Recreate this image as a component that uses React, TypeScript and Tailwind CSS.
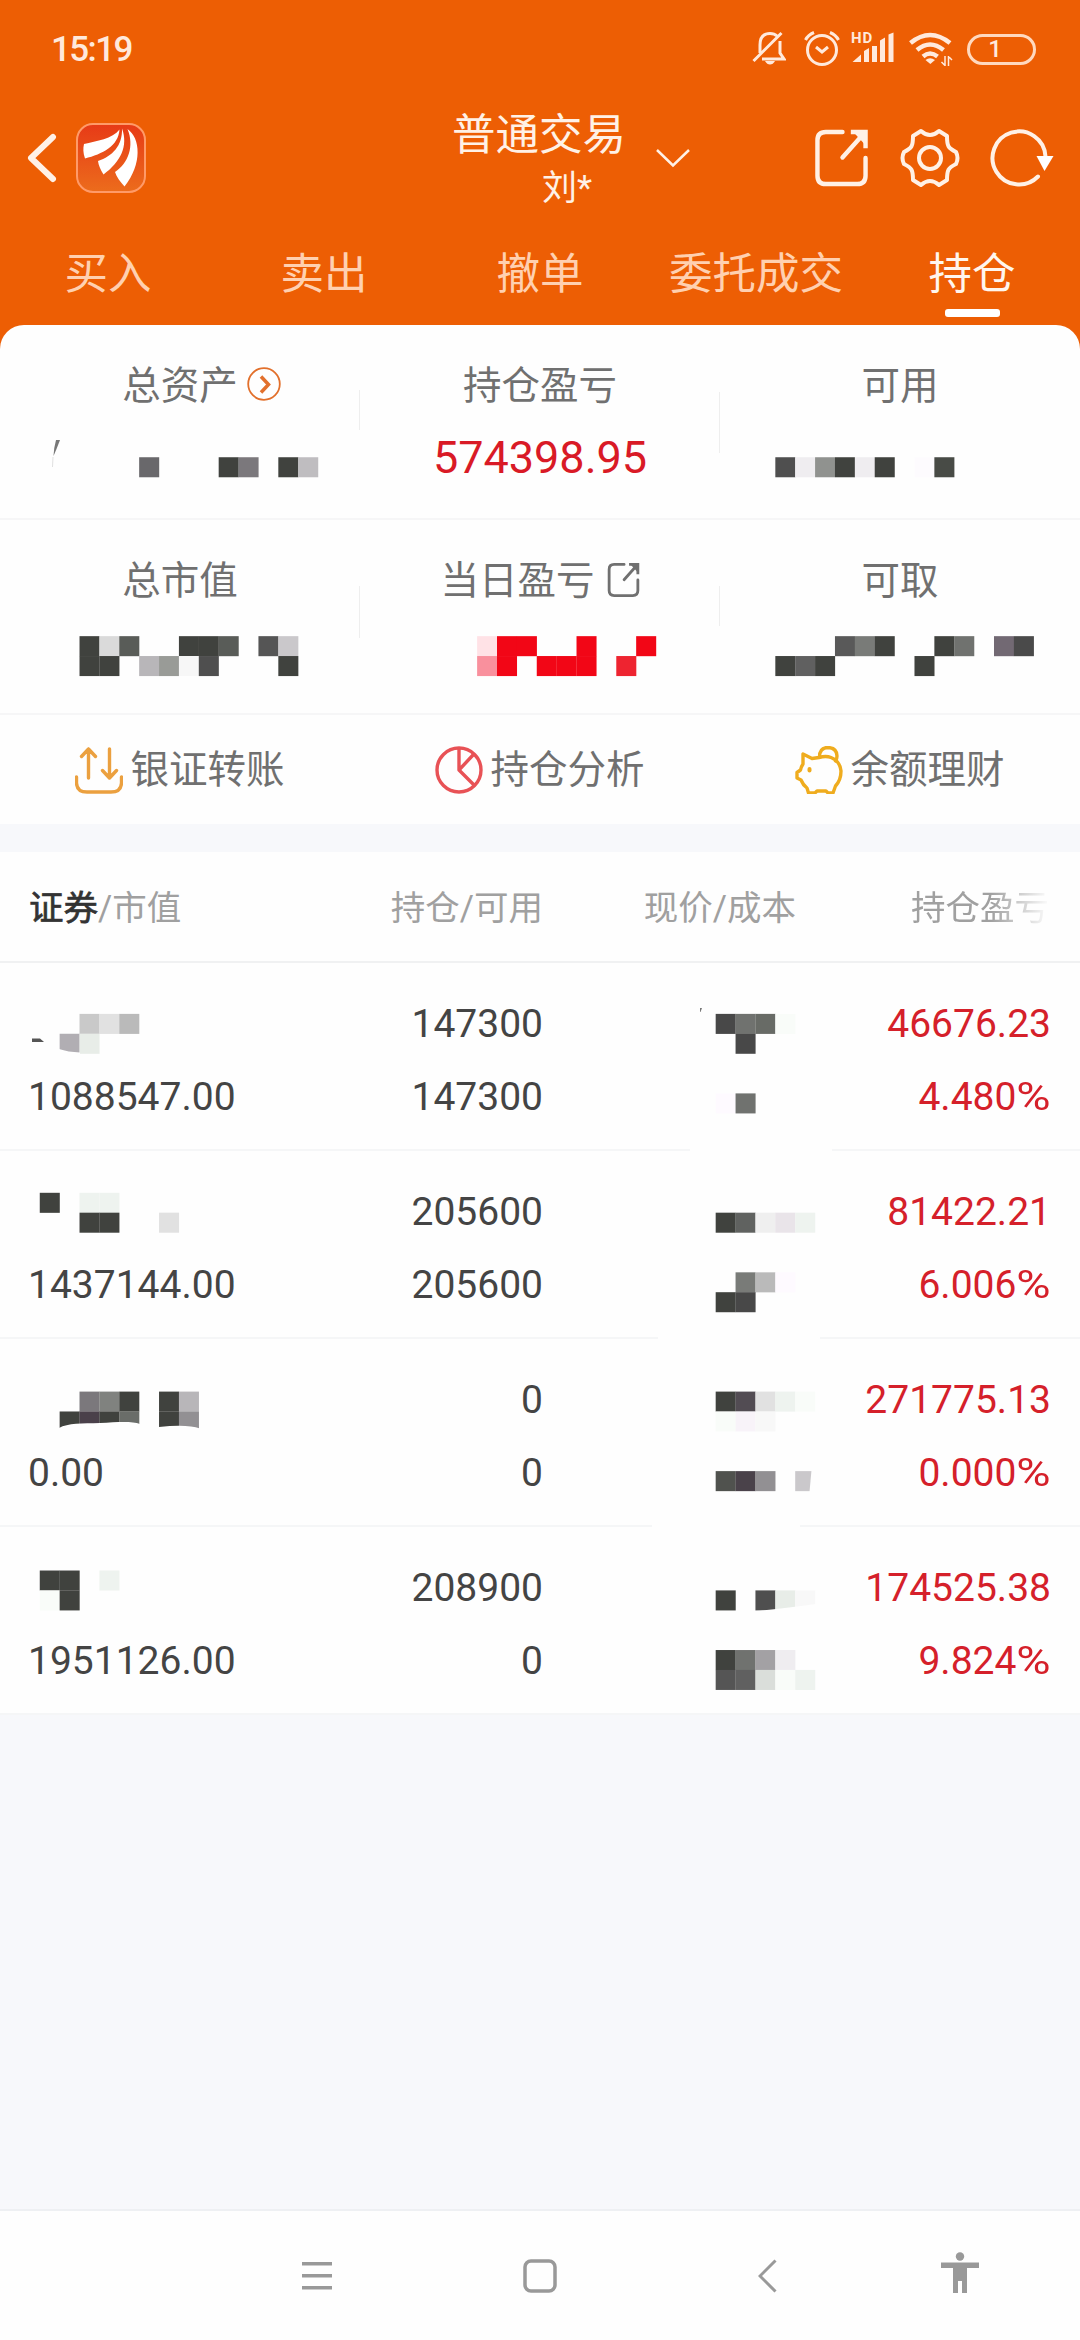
import React from 'react';

// Masked values sit on one page-wide grid, so cells are given as [column, row, color].
type Cell = [number, number, string];

const CELL = 19.88;
const DARK = '#40423e';
const RED = '#f20616';

interface MosaicProps {
    x: number;
    y: number;
    width: number;
    height: number;
    cells: Cell[];
    children?: React.ReactNode;
}

const Mosaic: React.FC<MosaicProps> = ({ x, y, width, height, cells, children }) => (
    <svg width={width} height={height} viewBox={`${x} ${y} ${width} ${height}`} className="block shrink-0">
        {cells.map(([col, row, color]) => (
            <rect key={`${col}-${row}`} x={col * CELL} y={row * CELL} width={CELL + 0.15} height={CELL + 0.15} fill={color} />
        ))}
        {children}
    </svg>
);

const totalAssets: Cell[] = [[7, 23, '#69686b'], [11, 23, DARK], [12, 23, '#7b787c'], [14, 23, DARK], [15, 23, '#bfbdc0']];
const available: Cell[] = [[39, 23, '#4f4f4f'], [40, 23, '#efedf0'], [41, 23, '#90928f'], [42, 23, DARK], [43, 23, '#efedf0'], [44, 23, DARK], [46, 23, '#fdfbfe'], [47, 23, '#484b46']];
const marketValue: Cell[] = [
    [4, 32, DARK], [5, 32, '#dadada'], [6, 32, '#595c58'], [9, 32, DARK], [10, 32, DARK], [11, 32, '#595c58'], [13, 32, '#555555'], [14, 32, '#cac8cb'],
    [4, 33, DARK], [5, 33, DARK], [7, 33, '#b8b6b9'], [8, 33, '#999b97'], [9, 33, '#f7f7f7'], [10, 33, '#4f4f4f'], [14, 33, DARK],
];
const dayProfit: Cell[] = [
    [24, 32, '#ffe2e6'], [25, 32, RED], [26, 32, RED], [29, 32, RED], [32, 32, RED],
    [24, 33, '#f9909d'], [25, 33, RED], [27, 33, RED], [28, 33, RED], [29, 33, RED], [31, 33, '#ee2430'],
];
const withdrawable: Cell[] = [
    [42, 32, '#595959'], [43, 32, '#797b78'], [44, 32, DARK], [47, 32, DARK], [48, 32, '#70726f'], [50, 32, '#726973'], [51, 32, '#4a4a4a'],
    [39, 33, DARK], [40, 33, '#606060'], [41, 33, DARK], [46, 33, DARK],
];

interface Holding {
    value: string;
    amount: string;
    usable: string;
    profit: string;
    rate: string;
    name: Cell[];
    nameExtra?: React.ReactNode;
    price: Cell[];
    priceExtra?: React.ReactNode;
    lineGap?: [number, number];
}

const holdings: Holding[] = [
    {
        value: '1088547.00', amount: '147300', usable: '147300', profit: '46676.23', rate: '4.480',
        name: [[4, 51, '#c9c9c9'], [5, 51, '#e1e1e1'], [6, 51, '#bababa'], [3, 52, '#b1aeb3'], [4, 52, '#e8ede8']],
        nameExtra: (
            <>
                <path d="M32 1038.5H40L44 1042H32Z" fill="#555" />
                <path d="M59 1049Q68 1052 80 1052.5V1055H59Z" fill="#fefefe" />
            </>
        ),
        price: [[36, 51, '#484848'], [37, 51, '#70726f'], [38, 51, '#686b66'], [39, 51, '#f9fcf9'], [37, 52, '#484848'], [36, 55, '#fefaff'], [37, 55, '#70726f']],
        priceExtra: <path d="M700 1008H702L700.5 1012H700Z" fill="#777" />,
        lineGap: [690, 832],
    },
    {
        value: '1437144.00', amount: '205600', usable: '205600', profit: '81422.21', rate: '6.006',
        name: [[2, 60, DARK], [4, 60, '#eef3ef'], [5, 60, '#eef3ef'], [4, 61, DARK], [5, 61, DARK], [8, 61, '#e1e1e1']],
        price: [[36, 61, DARK], [37, 61, '#606260'], [38, 61, '#efefef'], [39, 61, '#e9e4e9'], [40, 61, '#eef3ef'], [37, 64, '#797b78'], [38, 64, '#bababa'], [39, 64, '#fefaff'], [36, 65, DARK], [37, 65, '#484848']],
        lineGap: [658, 820],
    },
    {
        value: '0.00', amount: '0', usable: '0', profit: '271775.13', rate: '0.000',
        name: [[4, 70, '#7b787c'], [5, 70, '#80827f'], [6, 70, DARK], [8, 70, DARK], [9, 70, '#b8b6b9'], [3, 71, DARK], [4, 71, '#4a404a'], [5, 71, DARK], [6, 71, '#6a6d69'], [8, 71, DARK], [9, 71, '#929093']],
        nameExtra: <path d="M59 1428C68 1423 82 1423.5 100 1423C118 1422 132 1421 140 1424L159 1427Q187 1424 200 1428.5V1434H59Z" fill="#fefefe" />,
        price: [[36, 70, DARK], [37, 70, '#524c53'], [38, 70, '#e1e1e1'], [39, 70, '#eef3ef'], [40, 70, '#f9fcf9'], [36, 71, '#f9fcf9'], [37, 71, '#f8f3f9'], [38, 71, '#f8f8f8'], [36, 74, '#50524e'], [37, 74, '#4a424a'], [38, 74, '#929093'], [40, 74, '#cac8cb']],
        priceExtra: <path d="M811.5 1470H816V1492H809.5Z" fill="#fefefe" />,
        lineGap: [652, 800],
    },
    {
        value: '1951126.00', amount: '208900', usable: '0', profit: '174525.38', rate: '9.824',
        name: [[2, 79, DARK], [3, 79, DARK], [5, 79, '#eef3ef'], [2, 80, '#f9fcf9'], [3, 80, DARK]],
        price: [[36, 80, DARK], [38, 80, '#4f4f4f'], [39, 80, '#e8ede8'], [40, 80, '#f8f8f8'], [36, 83, DARK], [37, 83, '#70726f'], [38, 83, '#a3a1a4'], [39, 83, '#efedf0'], [36, 84, '#555555'], [37, 84, '#606060'], [38, 84, '#dadeda'], [39, 84, '#f9fcf9'], [40, 84, '#eef3ef']],
        priceExtra: <path d="M755 1611Q780 1609 816 1604V1612H755Z" fill="#fefefe" />,
    },
];

const StatusBar = () => (
    <div className="flex h-[98px] items-center justify-between pl-[51px] pr-[44px] text-[#ffe9dc]">
        <span className="pt-px text-[35px] font-medium leading-none tracking-[-1.6px]">15:19</span>
        <div className="flex items-center">
            <svg width="34" height="36" viewBox="752 31 34 36" fill="none" stroke="currentColor" strokeWidth="3">
                <path d="M760 53V45C760 37 764 33.500 770 33.500C773 33.500 775.500 34.500 777 36M780 41V53L784 59H762M753.500 61L781.500 33" />
                <path d="M765 61H775Q773 64.500 770 64.500Q767 64.500 765 61Z" fill="currentColor" stroke="none" />
            </svg>
            <svg width="36" height="36" viewBox="804 31 36 36" fill="none" stroke="currentColor" strokeWidth="3" className="ml-[18px]">
                <circle cx="822" cy="50" r="14.500" />
                <path d="M816 47L822 52L828 47M805.500 40Q808 35 814 32.500M838.500 40Q836 35 830 32.500" />
            </svg>
            <div className="relative ml-[11px] h-[36px] w-[44px]">
                <span className="absolute left-0 top-0 text-[15px] font-bold leading-[14px] tracking-[1px]">HD</span>
                <svg width="44" height="36" viewBox="851 31 44 36" fill="currentColor">
                    <path d="M852.500 62L861 54.500V62ZM864 51L869 48V62H864ZM872 46H877V62H872ZM880 40.500L885 37.500V62H880ZM888.500 34.500L893.500 32.500V62H888.500Z" />
                </svg>
            </div>
            <svg width="44" height="36" viewBox="909 31 44 36" fill="none" stroke="currentColor" strokeWidth="4.500" className="ml-[14px]">
                <path d="M910.500 43Q930 27 950 43M917 50Q930 39 943.500 50M923 56.500Q930 50.500 937.500 56.500" />
                <path d="M925.500 60Q930 56.500 935 60L930.300 64Z" fill="currentColor" stroke="none" />
                <path d="M945 56V66M948.500 56V66M941.500 62L945 65.500M948.500 56.500L952 60" strokeWidth="1.500" />
            </svg>
            <div className="ml-[14px] flex h-[31px] w-[69px] items-center justify-center rounded-full border-[3px] border-[#ffd9bf]">
                <span className="pr-[13px] text-[24px] font-medium leading-none">1</span>
            </div>
        </div>
    </div>
);

const ExportIcon: React.FC<{ className?: string; strokeWidth: number }> = ({ className, strokeWidth }) => (
    <svg viewBox="0 0 54 58" fill="none" stroke="currentColor" strokeWidth={strokeWidth} strokeLinecap="round" className={className}>
        <path d="M28 2.500H11Q2.500 2.500 2.500 11V47Q2.500 55.500 11 55.500H43Q51.500 55.500 51.500 47V29" />
        <path d="M28 28.500L48 6" />
        <path d="M36.500 2.500H51.500V19" strokeLinecap="butt" />
        <path d="M39 2.500H51.500V16Z" fill="currentColor" stroke="none" />
    </svg>
);

const NavHeader = () => (
    <div className="flex h-[120px] items-center text-[#fff1e6]">
        <svg width="30" height="50" viewBox="0 0 30 50" fill="none" stroke="currentColor" strokeWidth="6" strokeLinecap="round" strokeLinejoin="round" className="ml-[27px]">
            <path d="M26 4L4 25L26 46" />
        </svg>
        <svg width="70" height="70" viewBox="75.500 123 70 70" className="ml-[19px]">
            <defs>
                <linearGradient id="logoFill" x1="0" y1="0" x2="0" y2="1">
                    <stop offset="0" stopColor="#e73a17" />
                    <stop offset="1" stopColor="#ec6c1c" />
                </linearGradient>
            </defs>
            <rect x="76.500" y="124" width="68" height="68" rx="16" fill="url(#logoFill)" stroke="#ff9a68" strokeWidth="2" />
            <g fill="#fff">
                <path d="M83.500 144C96 141 112 139 119 129.500C118 146 102 154 84.500 158.500C82.500 153 82.500 148 83.500 144Z" />
                <path d="M121.500 128.500C128 146 120 162 103 174.500C100 170 98 165 97.500 161C112 156 122 146 121.500 128.500Z" />
                <path d="M127 129C140 138 142 164 124 186.500C120 182 116 177 114.500 172C128 163 134 146 127 129Z" />
            </g>
        </svg>
        <div className="ml-[306px] flex w-[176px] flex-col pt-[8px]">
            <span className="whitespace-nowrap text-[43.500px] leading-[54px]">普通交易</span>
            <span className="whitespace-nowrap pl-[90px] text-[35px] leading-[52px]">刘*</span>
        </div>
        <svg width="36" height="20" viewBox="0 0 36 20" fill="none" stroke="currentColor" strokeWidth="2.500" className="ml-[27px]">
            <path d="M2 2L18 17.500L34 2" />
        </svg>
        <ExportIcon strokeWidth={4.5} className="ml-[124px] h-[58px] w-[53px]" />
        <svg width="60" height="60" viewBox="-30 -30 60 60" fill="none" stroke="currentColor" strokeWidth="4" strokeLinejoin="round" className="ml-[32px]">
            <path d="M-9 -27Q0 -19 9 -27L17 -22C17 -12 18 -10 26 -6Q29 0 26 6C18 10 17 12 17 22L9 27Q0 19 -9 27L-17 22C-17 12 -18 10 -26 6Q-29 0 -26 -6C-18 -10 -17 -12 -17 -22Z" />
            <circle r="11" />
        </svg>
        <svg width="64" height="60" viewBox="988 128.500 64 60" fill="none" stroke="currentColor" strokeWidth="4" strokeLinecap="round" className="ml-[30px]">
            <path d="M1036 177A26.500 26.500 0 1 1 1043.500 157" />
            <path d="M1034.500 156.500H1051.500L1042.500 171.500Z" fill="#fff" stroke="none" />
        </svg>
    </div>
);

const tabs = ['买入', '卖出', '撤单', '委托成交', '持仓'];

const Tabs = () => (
    <div className="grid h-[107px] grid-cols-5 pt-[27px]">
        {tabs.map(tab => (
            <div key={tab} className={tab === '持仓' ? 'flex flex-col items-center text-[#fff6ee]' : 'flex flex-col items-center text-[#ffd0b0]'}>
                <span className="text-[43.500px] leading-[60px]">{tab}</span>
                {tab === '持仓' && <div className="mt-[4px] h-2 w-[55px] rounded-[3px] bg-white" />}
            </div>
        ))}
    </div>
);

interface StatProps {
    label: string;
    icon?: React.ReactNode;
    divider?: string;
    children: React.ReactNode;
}

const Stat: React.FC<StatProps> = ({ label, icon, divider, children }) => (
    <div className="relative flex flex-col items-center pt-[34px]">
        <div className="flex h-[52px] items-center">
            <span className="pt-px text-[38.500px] leading-[52px] text-[#707070]">{label}</span>
            {icon}
        </div>
        {children}
        {divider && <div className={`absolute right-0 w-px bg-[#eeeeee] ${divider}`} />}
    </div>
);

const Summary = () => (
    <>
        <div className="grid h-[195px] grid-cols-3 border-b-2 border-[#f6f6f7]">
            <Stat
                label="总资产"
                divider="top-[65px] h-[40px]"
                icon={
                    <svg width="34" height="34" viewBox="0 0 34 34" fill="none" stroke="#e2702c" className="-mr-[43px] -mt-[2px] ml-[9px]">
                        <circle cx="17" cy="17" r="15.800" strokeWidth="1.800" />
                        <path d="M14 9.500L21.500 17.500L14 25.500" strokeWidth="3.500" />
                    </svg>
                }
            >
                <Mosaic x={0} y={411} width={360} height={100} cells={totalAssets}>
                    <path d="M56 440H60L56.500 449L53.500 456Q54 447 56 440Z" fill="#555" opacity="0.8" />
                    <path d="M53 457L52.500 467" stroke="#ccc" opacity="0.6" />
                </Mosaic>
            </Stat>
            <Stat label="持仓盈亏" divider="top-[67px] h-[61px]">
                <span className="mt-[20px] text-[45px] leading-[54px] text-[#d91a26]">574398.95</span>
            </Stat>
            <Stat label="可用">
                <Mosaic x={720} y={411} width={360} height={100} cells={available} />
            </Stat>
        </div>
        <div className="grid h-[195px] grid-cols-3 border-b-2 border-[#f6f6f7]">
            <Stat label="总市值" divider="top-[66px] h-[52px]">
                <Mosaic x={0} y={606} width={360} height={100} cells={marketValue} />
            </Stat>
            <Stat
                label="当日盈亏"
                divider="top-[66px] h-[40px]"
                icon={<ExportIcon strokeWidth={4.8} className="-mt-px ml-[12px] h-[34px] w-[33px] text-[#707070]" />}
            >
                <Mosaic x={360} y={606} width={360} height={100} cells={dayProfit} />
            </Stat>
            <Stat label="可取">
                <Mosaic x={720} y={606} width={360} height={100} cells={withdrawable} />
            </Stat>
        </div>
    </>
);

const actions = [
    {
        label: '银证转账',
        icon: (
            <svg width="48" height="48" viewBox="74 744 48 48" fill="none" stroke="#eba03f" strokeWidth="3.400" strokeLinecap="round" strokeLinejoin="round">
                <path d="M75.500 775V781Q76 790 86 790H110Q120 790 120.500 781V775M87.500 776V747L80.500 754.500M87.500 747L94.500 754.500M108.500 747V776L101.500 768.500M108.500 776L115.500 768.500" />
            </svg>
        ),
    },
    {
        label: '持仓分析',
        icon: (
            <svg width="48" height="48" viewBox="0 0 48 48" fill="none" stroke="#e85256" strokeWidth="3.400" strokeLinejoin="round">
                <circle cx="24" cy="24" r="22" />
                <path d="M24 2V24L39.500 39.500M24 24L38.500 8.500" />
            </svg>
        ),
    },
    {
        label: '余额理财',
        icon: (
            <svg width="48" height="48" viewBox="794 744 48 48" fill="none" stroke="#efac1e" strokeWidth="3.400" strokeLinecap="round" strokeLinejoin="round">
                <path d="M802 755.500V762Q800 765 799.500 768L796 770.500V776L800 778Q802 783 806 786L807.500 791H814L816 789H825L827 791H832L834.500 784Q840 778 840 769Q839 759 830 755.500Q825 753.500 818 755.500L811 756.500L802 752Z" />
                <path d="M818.500 755Q818.500 745.500 827 745.500Q836 746 836 754Q836 757 834.500 759" />
                <path d="M808.500 767V768.500" strokeWidth="4" />
            </svg>
        ),
    },
];

const Actions = () => (
    <div className="grid h-[109px] grid-cols-3">
        {actions.map(action => (
            <button key={action.label} className="flex items-center justify-center gap-[7px]">
                {action.icon}
                <span className="pt-px text-[38.500px] leading-[52px] text-[#707070]">{action.label}</span>
            </button>
        ))}
    </div>
);

const TABLE_TOP = 963;
const ROW_HEIGHT = 188;

const HoldingRow: React.FC<{ holding: Holding; index: number }> = ({ holding, index }) => {
    const top = TABLE_TOP + index * ROW_HEIGHT;
    return (
        <div className="flex h-[188px] flex-col">
            <div className="grid h-[186px] grid-cols-[340px_203px_289px_219px] text-[39px] leading-[73px] text-[#444444]">
                <div className="flex flex-col pt-[25px]">
                    <Mosaic x={0} y={top + 25} width={340} height={73} cells={holding.name}>{holding.nameExtra}</Mosaic>
                    <span className="pl-[28px]">{holding.value}</span>
                </div>
                <div className="flex flex-col pt-[25px] text-right">
                    <span>{holding.amount}</span>
                    <span>{holding.usable}</span>
                </div>
                <Mosaic x={543} y={top} width={289} height={186} cells={holding.price}>{holding.priceExtra}</Mosaic>
                <div className="flex flex-col pt-[25px] text-right text-[#d5202a]">
                    <span>{holding.profit}</span>
                    <span>{holding.rate}<span className="ml-[6px] inline-block origin-right scale-x-[1.2]">%</span></span>
                </div>
            </div>
            <svg width="1080" height="2" viewBox="0 0 1080 2" className="block">
                <rect width="1080" height="2" fill="#f5f6f7" />
                {holding.lineGap && <rect x={holding.lineGap[0]} width={holding.lineGap[1] - holding.lineGap[0]} height="2" fill="#fefefe" />}
            </svg>
        </div>
    );
};

const Holdings = () => (
    <div className="bg-[#fefefe]">
        <div className="grid h-[111px] grid-cols-[340px_203px_253px_254px] items-center border-b-2 border-[#f0f1f2] pt-[5px] text-[34.500px] text-[#a0a0a0]">
            <span className="pl-[29px]"><span className="text-[#333333] [-webkit-text-stroke:0.7px_#333333]">证券</span>/市值</span>
            <span className="text-right">持仓/可用</span>
            <span className="text-right">现价/成本</span>
            <span className="overflow-hidden whitespace-nowrap pl-[115px] [mask-image:linear-gradient(to_right,#000_195px,transparent_254px)]">持仓盈亏</span>
        </div>
        {holdings.map((holding, index) => (
            <HoldingRow key={holding.profit} holding={holding} index={index} />
        ))}
    </div>
);

const SystemNav = () => (
    <div className="mt-auto flex h-[131px] items-center border-t-2 border-[#eef0f3] bg-[#fefefe] text-[#999999]">
        <svg width="30" height="30" viewBox="0 0 30 30" fill="currentColor" className="ml-[302px]">
            <path d="M0 1H30V4.500H0ZM0 13H30V16.500H0ZM0 25H30V28.500H0Z" />
        </svg>
        <svg width="34" height="34" viewBox="0 0 34 34" fill="none" stroke="currentColor" strokeWidth="3.500" className="ml-[191px]">
            <rect x="2" y="2" width="30" height="30" rx="6" />
        </svg>
        <svg width="19" height="34" viewBox="0 0 19 34" fill="none" stroke="currentColor" strokeWidth="3" className="ml-[201px]">
            <path d="M17.500 1.500L2 17L17.500 32.500" />
        </svg>
        <svg width="38" height="42" viewBox="0 0 38 42" fill="currentColor" className="-mt-[5px] ml-[164px]">
            <circle cx="19" cy="4.500" r="4.200" />
            <path d="M0 10.500H38V16H26V41H21V29H17V41H12V16H0Z" />
        </svg>
    </div>
);

export default function App() {
    return (
        <div className="flex h-[2340px] w-[1080px] flex-col overflow-hidden bg-[#f7f8fb] font-['Roboto','Noto_Sans_CJK_SC',sans-serif]">
            <div className="bg-[#ed5e04]">
                <StatusBar />
                <NavHeader />
                <Tabs />
                <div className="rounded-t-[24px] bg-[#fefefe]">
                    <Summary />
                    <Actions />
                </div>
            </div>
            <div className="h-[28px] shrink-0" />
            <Holdings />
            <SystemNav />
        </div>
    );
}
